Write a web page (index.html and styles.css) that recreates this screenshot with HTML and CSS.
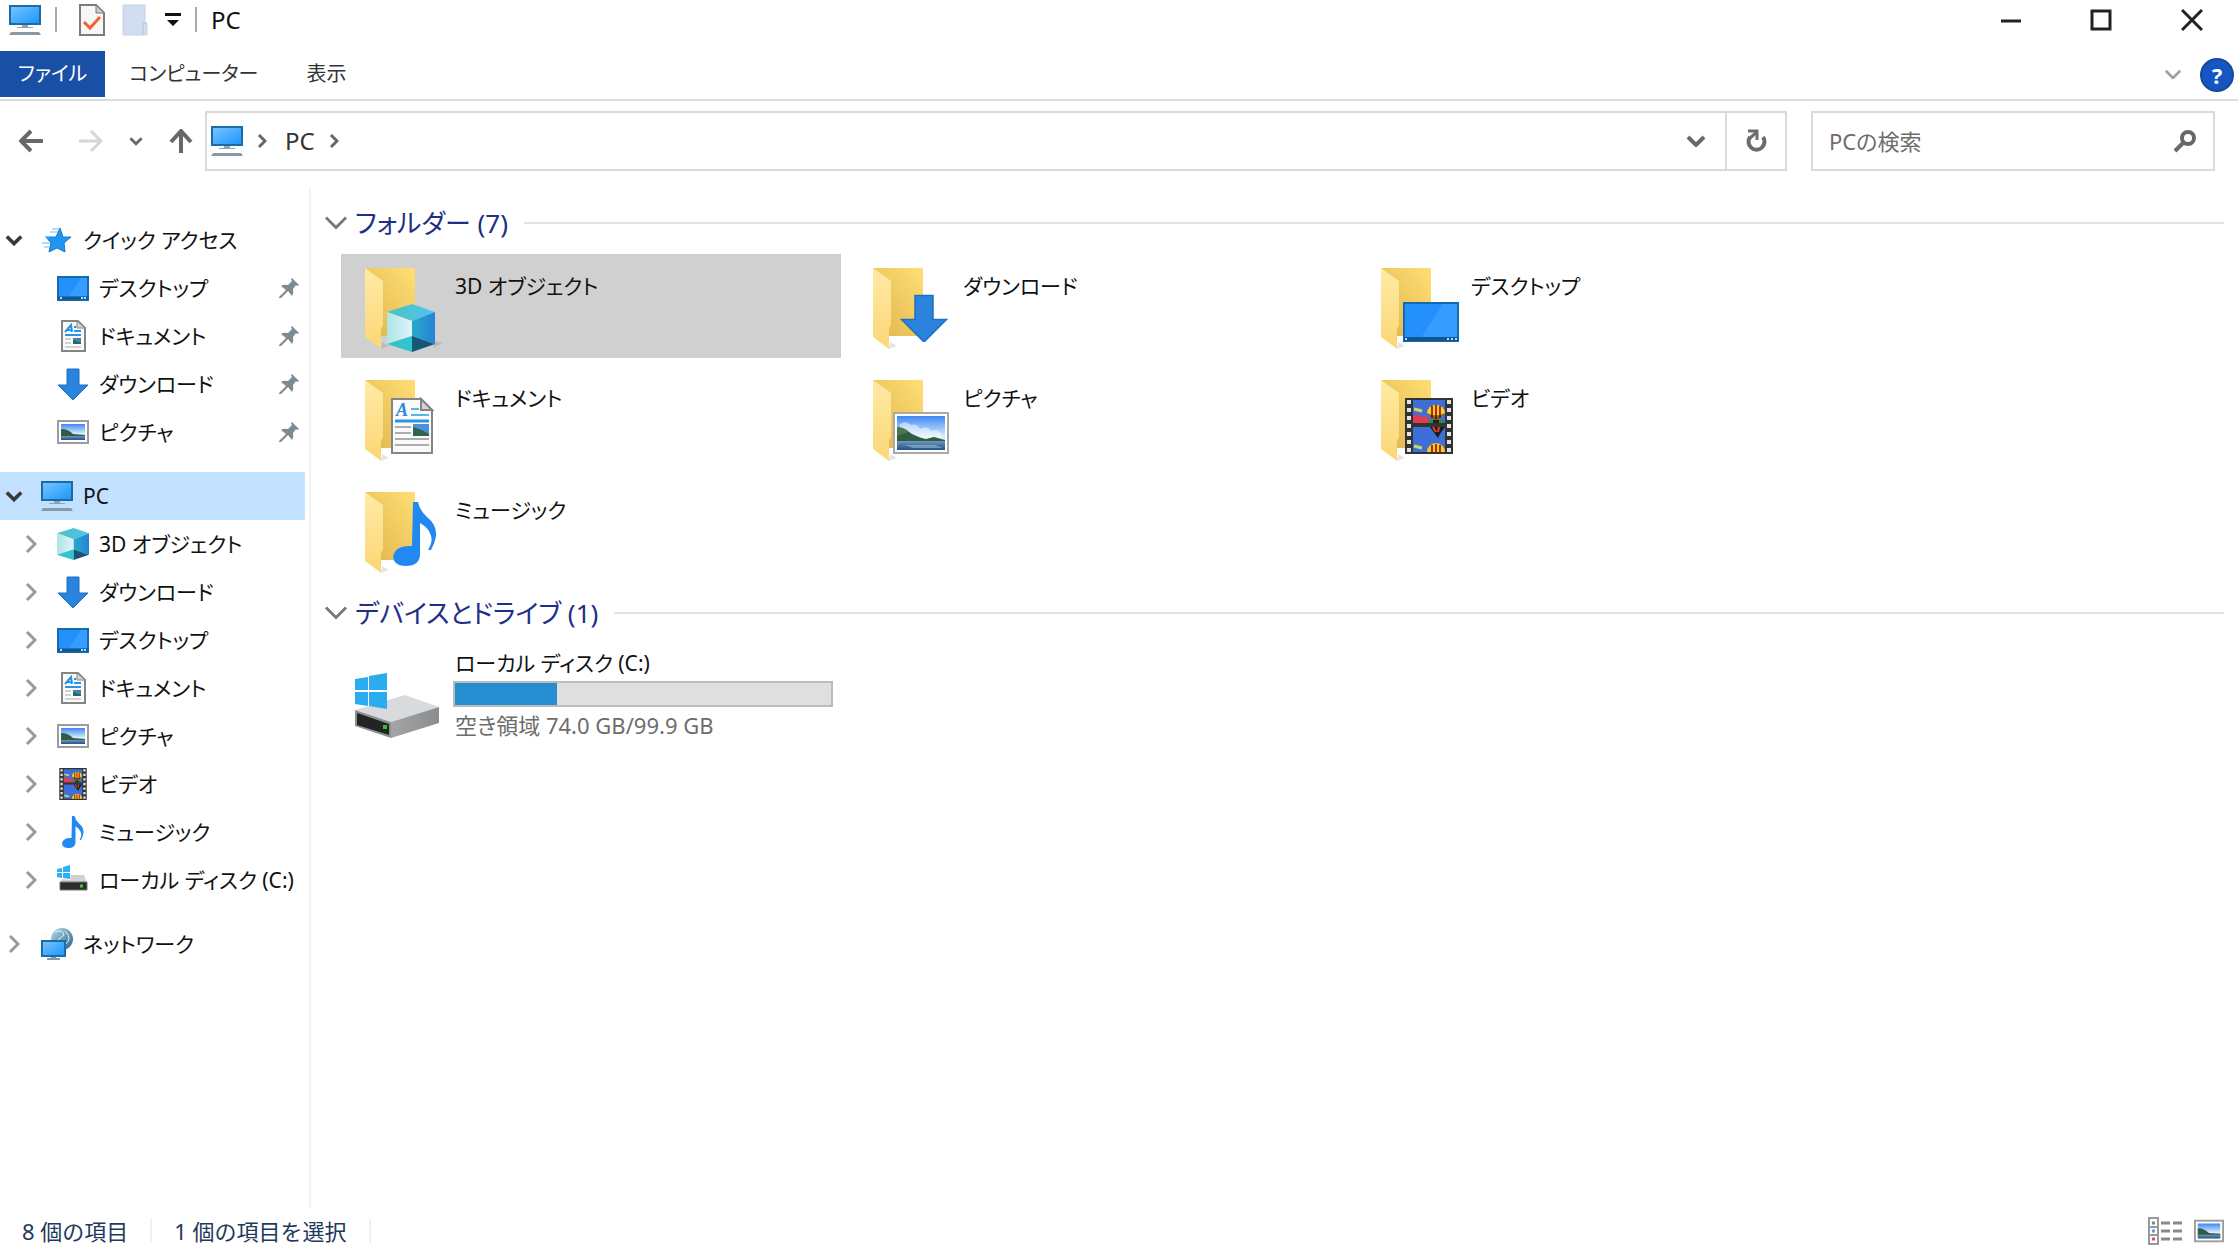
FILE: index.html
```html
<!DOCTYPE html>
<html lang="ja">
<head>
  <meta charset="UTF-8" />
  <meta name="viewport" content="width=device-width, initial-scale=1.0"/>
  <title>PC</title>
  <link rel="stylesheet" href="styles.css">
</head>
<body>

  <!-- icon sprite -->
  <svg class="sprite" width="0" height="0" aria-hidden="true">
    <defs>
      <linearGradient id="g-screen" x1="0" y1="0" x2="1" y2="1">
        <stop offset="0" stop-color="#7cc6ff"/><stop offset="1" stop-color="#1795fb"/>
      </linearGradient>
      <linearGradient id="g-back" x1="0" y1="1" x2="1" y2="0">
        <stop offset="0" stop-color="#dfb44c"/><stop offset="1" stop-color="#ffdf75"/>
      </linearGradient>
      <linearGradient id="g-front" x1="0" y1="0" x2="0" y2="1">
        <stop offset="0" stop-color="#ffeaa4"/><stop offset="1" stop-color="#fbd777"/>
      </linearGradient>
      <linearGradient id="g-sky" x1="0" y1="0" x2="0" y2="1">
        <stop offset="0" stop-color="#3f87f2"/><stop offset="0.6" stop-color="#d8ecfb"/>
      </linearGradient>
      <linearGradient id="g-water" x1="0" y1="0" x2="0" y2="1">
        <stop offset="0" stop-color="#6d97bd"/><stop offset="1" stop-color="#235087"/>
      </linearGradient>
      <linearGradient id="g-right" x1="0" y1="0" x2="1" y2="0">
        <stop offset="0" stop-color="#29aac8"/><stop offset="1" stop-color="#2583d9"/>
      </linearGradient>
      <linearGradient id="g-left" x1="0" y1="0" x2="1" y2="0">
        <stop offset="0" stop-color="#aee5e4"/><stop offset="1" stop-color="#e0f3fb"/>
      </linearGradient>
      <linearGradient id="g-top" x1="0" y1="0" x2="1" y2="0">
        <stop offset="0" stop-color="#4ec3c0"/><stop offset="1" stop-color="#4fc3f0"/>
      </linearGradient>
      <linearGradient id="g-globe" x1="0" y1="0" x2="1" y2="1">
        <stop offset="0" stop-color="#b9dcea"/><stop offset="1" stop-color="#1f6288"/>
      </linearGradient>
      <linearGradient id="g-side" x1="0" y1="0" x2="1" y2="0">
        <stop offset="0" stop-color="#a4a5a7"/><stop offset="1" stop-color="#8b8c8e"/>
      </linearGradient>
    </defs>

    <symbol id="i-pc" viewBox="0 0 32 32">
      <rect x="1" y="2" width="30" height="18" fill="url(#g-screen)" stroke="#1c6ba6" stroke-width="2"/>
      <path d="M13 21h6v2h5v1H8v-1h5z" fill="#8ea3b3"/>
      <path d="M2 28h28l2 3H0z" fill="#8999a8"/>
    </symbol>

    <symbol id="i-check" viewBox="0 0 26 32">
      <path d="M1 1h16l8 8v22H1z" fill="#f7f7f7" stroke="#7b7b7b" stroke-width="2"/>
      <path d="M17 1v8h8z" fill="#c9c9c9" stroke="#7b7b7b"/>
      <path d="M5 18l6 6 10-11" fill="none" stroke="#f0642d" stroke-width="3"/>
    </symbol>

    <symbol id="i-newfolder" viewBox="0 0 26 32">
      <path d="M1 1h22v18h2v12H1z" fill="#d3ddf0" stroke="#c3d0e8"/>
      <path d="M21 31V19h3" fill="none" stroke="#b2c2de"/>
    </symbol>

    <symbol id="i-star" viewBox="0 0 32 32">
      <path d="M19 4l3 9h8l-7 6 1 9-8-4-8 4 2-9-5-6h10z" fill="#2196f0" stroke="#1878c8"/>
      <path d="M11 5h8M9 8h8M4 13h5M1 19h8M3 23h6" stroke="#6bb8f3" stroke-width="1"/>
    </symbol>

    <symbol id="i-desktop" viewBox="0 0 32 32">
      <rect x="1" y="5" width="30" height="23" fill="#2390fb" stroke="#1569ad" stroke-width="2"/>
      <path d="M12 24L24 6h6v18z" fill="#369cff"/>
      <path d="M1 26h30" stroke="#11578f" stroke-width="3"/>
      <path d="M3 26h2M24 26h2M27 26h2" stroke="#b6dcff" stroke-width="2"/>
    </symbol>

    <symbol id="i-doc" viewBox="0 0 32 32">
      <path d="M5 1h16l7 7v23H5z" fill="#fafafa" stroke="#858585" stroke-width="2"/>
      <path d="M20 1v7h8z" fill="#d5d5d5" stroke="#858585"/>
      <path d="M8 12l6-7 1 7M10 10h5M17 7h2M17 11h7M8 15h16" fill="none" stroke="#2a94dd" stroke-width="2"/>
      <path d="M8 19h6M8 23h6M8 27h16" stroke="#adadad" stroke-width="1"/>
      <path d="M16 18h8v6h-8z" fill="#3d80ba"/>
      <path d="M16 20l8 3v1h-8z" fill="#33634a"/>
    </symbol>

    <symbol id="i-down" viewBox="0 0 32 32">
      <path d="M10 1h12v16h9L16 32 1 17h9z" fill="#2b83de" stroke="#1f6fc2"/>
    </symbol>

    <symbol id="i-photo" viewBox="0 0 56 42">
      <rect x="1" y="1" width="54" height="40" fill="#fff" stroke="#a9a9a9" stroke-width="2"/>
      <rect x="4" y="4" width="48" height="34" fill="url(#g-sky)"/>
      <path d="M7 12q6-4 11 1 6-2 9 4 8-4 11 2 6-2 10 2v8H6z" fill="#fff" opacity="0.5"/>
      <path d="M4 16q8 0 15 6 8 4 14 5l8-2 11 3v3H4z" fill="#2f5c43"/>
      <path d="M4 15q7 0 12 5l-12 4z" fill="#4a7752"/>
      <rect x="4" y="29" width="48" height="9" fill="url(#g-water)"/>
      <path d="M12 33h30l8 3H20z" fill="#c5d9ea" opacity="0.4"/>
    </symbol>

    <symbol id="i-photo-sm" viewBox="0 0 32 24">
      <rect x="1" y="1" width="30" height="22" fill="#fff" stroke="#9c9c9c" stroke-width="2"/>
      <rect x="4" y="4" width="24" height="16" fill="url(#g-sky)"/>
      <path d="M4 9q7 0 12 5l12 1v2H4z" fill="#2f5c43"/>
      <rect x="4" y="16" width="24" height="4" fill="url(#g-water)"/>
    </symbol>

    <symbol id="i-cube" viewBox="0 0 48 48">
      <path d="M0 8L25 0l23 8-23 9z" fill="url(#g-top)"/>
      <path d="M0 8l25 9v15L0 40z" fill="url(#g-left)"/>
      <path d="M48 8l-23 9v15l23 8z" fill="url(#g-right)"/>
      <path d="M0 40l25-8v16z" fill="#33c3cd"/>
      <path d="M48 40l-23-8v16z" fill="#185676"/>
    </symbol>

    <symbol id="i-film" viewBox="0 0 48 56">
      <rect x="0" y="0" width="48" height="56" fill="#333"/>
      <path d="M4 2v52M44 2v52" stroke="#e4e4e4" stroke-width="4" stroke-dasharray="4 4"/>
      <path d="M8 2h32v23H8zM8 29h32v25H8z" fill="#3e6fd6"/>
      <path d="M8 18l5-2 4 3 5-1 3 7H8z" fill="#e23b52"/>
      <path d="M22 25l4-3 14 1v2z" fill="#2e8a3d"/>
      <path d="M9 11l8 2M9 48l8 2" stroke="#c7d85a" stroke-width="3"/>
      <path d="M22 15a9 8 0 0 1 18 0l-6 7h-6z" fill="#f4d21c"/>
      <path d="M27 8v12M31 7v14M35 8v12" stroke="#b52518" stroke-width="2"/>
      <path d="M22 15q9 5 18 0l-6 7h-6z" fill="#222" opacity="0.6"/>
      <path d="M28 22h6v3h-6z" fill="#222"/>
      <path d="M25 29h15l-5 7-2 4-3-4z" fill="#1b1b1b"/>
      <path d="M28 29l3 5M34 29l-1 5" stroke="#e2412c" stroke-width="2"/>
      <path d="M22 54a9 9 0 0 1 18 0z" fill="#f4d21c"/>
      <path d="M27 47v7M31 46v8M35 47v7" stroke="#b52518" stroke-width="2"/>
    </symbol>

    <symbol id="i-note" viewBox="0 0 44 64">
      <path d="M20 0h5q2 9 9 15 10 8 9 19-1 7-5 14h-3q5-8 3-14-2-8-11-13v32q-1 11-14 11-12 0-13-9 2-12 19-11z" fill="#2288f2"/>
    </symbol>

    <symbol id="i-drive-sm" viewBox="0 0 32 32">
      <path d="M0 5l5-1v4H0zM6 3l7-2v7H6zM0 9h5v5l-5-1zM6 9h7v6l-7-1z" fill="#2cb1f2"/>
      <path d="M14 11h13l3 8H3l2-4 8 1z" fill="#cfd1d4"/>
      <path d="M3 18h27v8H3z" fill="#2c2c2c" stroke="#777"/>
      <path d="M23 22h3" stroke="#35d12c" stroke-width="3"/>
    </symbol>

    <symbol id="i-network" viewBox="0 0 32 32">
      <circle cx="21" cy="11" r="11" fill="url(#g-globe)"/>
      <path d="M14 4q8-3 9 3l-6 5M24 3q5 4 4 9l-4 5" fill="none" stroke="#e1f2f8" stroke-width="1"/>
      <rect x="1" y="13" width="23" height="15" fill="url(#g-screen)" stroke="#1c6ba6" stroke-width="2"/>
      <path d="M10 29h5v1h4v2H6v-2h4z" fill="#8999a8"/>
    </symbol>

    <symbol id="i-pin" viewBox="0 0 20 20">
      <path d="M13 0l7 7-2 1-1-1-3 4q1 4-1 7l-4-5-7 7H0v-1l7-7-5-4q3-2 7-1l4-4-1-2z" fill="#7c8a94"/>
    </symbol>

    <symbol id="i-chev-down" viewBox="0 0 20 12">
      <path d="M2 2l8 8 8-8" fill="none" stroke="currentColor" stroke-width="4"/>
    </symbol>
    <symbol id="i-chev-right" viewBox="0 0 12 20">
      <path d="M2 2l8 8-8 8" fill="none" stroke="currentColor" stroke-width="3"/>
    </symbol>

    <symbol id="i-folder" viewBox="0 0 96 96">
      <path d="M32 91l8-3-7-4z" fill="#000" opacity="0.1"/>
      <path d="M16 10h50v68H24z" fill="url(#g-back)"/>
      <path d="M16 10l18 13v44l-2 4v20L16 79z" fill="url(#g-front)"/>
    </symbol>
  </svg>

  <header class="titlebar">
    <svg class="icon"><use href="#i-pc"/></svg>
    <span class="bar"></span>
    <button class="quick" aria-label="プロパティ"><svg><use href="#i-check"/></svg></button>
    <button class="quick" aria-label="新しいフォルダー"><svg><use href="#i-newfolder"/></svg></button>
    <button class="more" aria-label="カスタマイズ"><svg viewBox="0 0 16 14"><path d="M0 0h16v3H0zM2 7h12l-6 6z" fill="#111"/></svg></button>
    <span class="bar"></span>
    <h1>PC</h1>
    <div class="window-buttons">
      <button aria-label="最小化"><svg viewBox="0 0 22 22"><path d="M1 12h20" stroke="#222" stroke-width="3"/></svg></button>
      <button aria-label="最大化"><svg viewBox="0 0 22 22"><path d="M2 2h18v18H2z" fill="none" stroke="#222" stroke-width="3"/></svg></button>
      <button aria-label="閉じる"><svg viewBox="0 0 22 22"><path d="M1 1l20 20M21 1L1 21" stroke="#222" stroke-width="3"/></svg></button>
    </div>
  </header>

  <nav class="ribbon">
    <a href="#" class="tab file">ファイル</a>
    <a href="#" class="tab">コンピューター</a>
    <a href="#" class="tab">表示</a>
    <button class="expand" aria-label="リボンの展開"><svg viewBox="0 0 20 12"><path d="M2 2l8 8 8-8" fill="none" stroke="#a0a0a0" stroke-width="3"/></svg></button>
    <button class="help" aria-label="ヘルプ">?</button>
  </nav>

  <div class="navbar">
    <div class="history">
      <button class="back" aria-label="戻る"><svg class="arrow" viewBox="0 0 24 24"><path d="M24 12H2M12 2L2 12l10 10" fill="none" stroke="#686868" stroke-width="4"/></svg></button>
      <button aria-label="進む"><svg class="arrow" viewBox="0 0 24 24"><path d="M0 12h22M12 2l10 10-10 10" fill="none" stroke="#d6d6d6" stroke-width="3"/></svg></button>
      <button class="recent" aria-label="最近表示した場所"><svg><use href="#i-chev-down"/></svg></button>
      <button aria-label="上へ"><svg class="arrow" viewBox="0 0 24 24"><path d="M12 24V2M2 13L12 2l10 11" fill="none" stroke="#686868" stroke-width="4"/></svg></button>
    </div>
    <div class="address">
      <svg class="icon"><use href="#i-pc"/></svg>
      <svg class="crumb" viewBox="0 0 10 16"><path d="M2 2l6 6-6 6" fill="none" stroke="#686868" stroke-width="3"/></svg>
      <a href="#">PC</a>
      <svg class="crumb" viewBox="0 0 10 16"><path d="M2 2l6 6-6 6" fill="none" stroke="#686868" stroke-width="3"/></svg>
      <button class="drop" aria-label="以前の場所"><svg class="chev-down"><use href="#i-chev-down"/></svg></button>
      <button class="refresh" aria-label="最新の情報に更新"><svg viewBox="0 0 22 24"><path d="M18 8a8 8 0 1 1-13 0" fill="none" stroke="#6c6c6c" stroke-width="4"/><path d="M3 2h9v9" fill="none" stroke="#6c6c6c" stroke-width="3"/><path d="M12 3l-7 6" stroke="#6c6c6c" stroke-width="3"/></svg></button>
    </div>
    <form class="search">
      <input type="text" placeholder="PCの検索" aria-label="PCの検索">
      <button type="button" aria-label="検索"><svg viewBox="0 0 24 24"><circle cx="15" cy="9" r="6" fill="none" stroke="#686868" stroke-width="4"/><path d="M11 13l-9 9" stroke="#686868" stroke-width="4"/></svg></button>
    </form>
  </div>

  <div class="content">
    <aside class="sidebar">
      <ul>
        <li><a href="#" class="root"><svg class="chev-down"><use href="#i-chev-down"/></svg><svg class="icon"><use href="#i-star"/></svg>クイック アクセス</a></li>
        <li><a href="#"><svg class="icon"><use href="#i-desktop"/></svg>デスクトップ<svg class="pin"><use href="#i-pin"/></svg></a></li>
        <li><a href="#"><svg class="icon"><use href="#i-doc"/></svg>ドキュメント<svg class="pin"><use href="#i-pin"/></svg></a></li>
        <li><a href="#"><svg class="icon"><use href="#i-down"/></svg>ダウンロード<svg class="pin"><use href="#i-pin"/></svg></a></li>
        <li><a href="#"><svg class="icon"><use href="#i-photo-sm"/></svg>ピクチャ<svg class="pin"><use href="#i-pin"/></svg></a></li>
      </ul>
      <ul>
        <li><a href="#" class="root selected"><svg class="chev-down"><use href="#i-chev-down"/></svg><svg class="icon"><use href="#i-pc"/></svg>PC</a></li>
        <li><a href="#" class="sub"><svg class="chev-right"><use href="#i-chev-right"/></svg><svg class="icon"><use href="#i-cube"/></svg>3D オブジェクト</a></li>
        <li><a href="#" class="sub"><svg class="chev-right"><use href="#i-chev-right"/></svg><svg class="icon"><use href="#i-down"/></svg>ダウンロード</a></li>
        <li><a href="#" class="sub"><svg class="chev-right"><use href="#i-chev-right"/></svg><svg class="icon"><use href="#i-desktop"/></svg>デスクトップ</a></li>
        <li><a href="#" class="sub"><svg class="chev-right"><use href="#i-chev-right"/></svg><svg class="icon"><use href="#i-doc"/></svg>ドキュメント</a></li>
        <li><a href="#" class="sub"><svg class="chev-right"><use href="#i-chev-right"/></svg><svg class="icon"><use href="#i-photo-sm"/></svg>ピクチャ</a></li>
        <li><a href="#" class="sub"><svg class="chev-right"><use href="#i-chev-right"/></svg><svg class="icon"><use href="#i-film"/></svg>ビデオ</a></li>
        <li><a href="#" class="sub"><svg class="chev-right"><use href="#i-chev-right"/></svg><svg class="icon"><use href="#i-note"/></svg>ミュージック</a></li>
        <li><a href="#" class="sub"><svg class="chev-right"><use href="#i-chev-right"/></svg><svg class="icon"><use href="#i-drive-sm"/></svg>ローカル ディスク (C:)</a></li>
      </ul>
      <ul>
        <li><a href="#" class="root"><svg class="chev-right"><use href="#i-chev-right"/></svg><svg class="icon"><use href="#i-network"/></svg>ネットワーク</a></li>
      </ul>
    </aside>

    <main>
      <section>
        <h2><svg viewBox="0 0 24 14"><path d="M1 1l11 11L23 1" fill="none" stroke="#777" stroke-width="3"/></svg>フォルダー (7)</h2>
        <div class="tiles">
          <a href="#" class="tile selected">
            <svg viewBox="0 0 96 96"><use href="#i-folder" width="96" height="96"/><path d="M84 90l10-5-8-2z" opacity="0.1"/><use href="#i-cube" x="38" y="46" width="48" height="48"/></svg>
            <span>3D オブジェクト</span>
          </a>
          <a href="#" class="tile">
            <svg viewBox="0 0 96 96"><use href="#i-folder" width="96" height="96"/><use href="#i-down" x="43" y="36" width="48" height="48"/></svg>
            <span>ダウンロード</span>
          </a>
          <a href="#" class="tile">
            <svg viewBox="0 0 96 96"><use href="#i-folder" width="96" height="96"/><rect x="39" y="45" width="54" height="38" fill="#2390fb" stroke="#1569ad" stroke-width="2"/><path d="M56 80l22-34h14v34z" fill="#369cff"/><path d="M39 81h54" stroke="#11578f" stroke-width="4"/><path d="M40 81h2M82 81h2M86 81h2M90 81h2" stroke="#b6dcff" stroke-width="2"/></svg>
            <span>デスクトップ</span>
          </a>
          <a href="#" class="tile">
            <svg viewBox="0 0 96 96"><use href="#i-folder" width="96" height="96"/>
              <path d="M43 29h29l11 11v43H43z" fill="#fafafa" stroke="#858585" stroke-width="2"/><path d="M72 29v11h11z" fill="#d5d5d5" stroke="#858585" stroke-width="2"/>
              <text x="47" y="46" class="letter">A</text>
              <path d="M62 39h8M62 45h18" stroke="#55b5ee" stroke-width="2"/><path d="M46 51h34" stroke="#2a94dd" stroke-width="3"/>
              <path d="M46 57h16M46 63h16M46 69h34M46 75h34" stroke="#adadad" stroke-width="2"/>
              <path d="M64 54h16v12H64z" fill="#4d8fd8"/><path d="M64 57q8 2 16 7v2H64z" fill="#33634a"/></svg>
            <span>ドキュメント</span>
          </a>
          <a href="#" class="tile">
            <svg viewBox="0 0 96 96"><use href="#i-folder" width="96" height="96"/><use href="#i-photo" x="36" y="42" width="56" height="42"/></svg>
            <span>ピクチャ</span>
          </a>
          <a href="#" class="tile">
            <svg viewBox="0 0 96 96"><use href="#i-folder" width="96" height="96"/><use href="#i-film" x="40" y="28" width="48" height="56"/></svg>
            <span>ビデオ</span>
          </a>
          <a href="#" class="tile">
            <svg viewBox="0 0 96 96"><use href="#i-folder" width="96" height="96"/><use href="#i-note" x="44" y="20" width="44" height="64"/></svg>
            <span>ミュージック</span>
          </a>
        </div>
      </section>

      <section>
        <h2><svg viewBox="0 0 24 14"><path d="M1 1l11 11L23 1" fill="none" stroke="#777" stroke-width="3"/></svg>デバイスとドライブ (1)</h2>
        <div class="tiles">
          <a href="#" class="tile">
            <svg viewBox="0 0 96 96">
              <path d="M6 62l50-15 34 12-48 15z" fill="#d9dadd"/>
              <path d="M42 74l48-15v16L42 90z" fill="url(#g-side)"/>
              <path d="M6 62l36 12v16L6 78z" fill="#8d8f92"/>
              <path d="M8 65l32 11v11L8 77z" fill="#232323"/>
              <rect x="34" y="77" width="4" height="4" fill="#2fc426"/>
              <path d="M6 31l13-2v13H6zM20 28l18-3v17H20zM6 44h13v14l-13-2zM20 44h18v17l-18-3z" fill="#2bacee"/>
            </svg>
            <div class="drive-info">
              <span>ローカル ディスク (C:)</span>
              <div class="usage"><div class="used" style="width: 27%"></div></div>
              <span class="free">空き領域 74.0 GB/99.9 GB</span>
            </div>
          </a>
        </div>
      </section>
    </main>
  </div>

  <footer class="status">
    <span>8 個の項目</span>
    <span>1 個の項目を選択</span>
    <div class="views">
      <button aria-label="詳細"><svg class="details" viewBox="0 0 34 28"><path d="M1 1h9v26H1zM1 10h9M1 18h9" fill="#fff" stroke="#999" stroke-width="2"/><path d="M13 6h9M25 6h9M13 14h9M25 14h9M13 22h9M25 22h9" stroke="#8a8a8a" stroke-width="3"/><path d="M4 6h3" stroke="#5c9a78" stroke-width="3"/><path d="M4 14h3" stroke="#5a96f0" stroke-width="3"/><path d="M4 22h3" stroke="#e5484d" stroke-width="3"/></svg></button>
      <button aria-label="大アイコン"><svg class="large"><use href="#i-photo-sm"/></svg></button>
    </div>
  </footer>

</body>
</html>
```
FILE: styles.css
```css
* { margin: 0; padding: 0; box-sizing: border-box; }
body {
  min-height: 100vh;
  display: flex;
  flex-direction: column;
  background: #fff;
  color: #111;
  font-family: "Noto Sans", "Noto Sans CJK JP", sans-serif;
  font-size: 22px;
  line-height: 32px;
  font-feature-settings: "palt";
}
a { color: inherit; text-decoration: none; }
ul { list-style: none; }
svg { display: block; flex: none; }
button {
  display: flex;
  align-items: center;
  justify-content: center;
  background: transparent;
  border: none;
  color: inherit;
  font: inherit;
  cursor: pointer;
}
.icon { width: 32px; height: 32px; }
.chev-down { width: 20px; height: 12px; }
.chev-right { width: 12px; height: 20px; }

/* title bar */
.titlebar {
  height: 51px;
  padding: 0 24px 12px 9px;
  display: flex;
  align-items: center;
}
.titlebar h1 {
  font-size: 24px;
  font-weight: normal;
}
.bar {
  width: 2px;
  height: 25px;
  margin: 0 14px;
  background: #aaa;
}
.quick { margin: 0 9px 0 8px; }
.quick svg { width: 26px; height: 32px; }
.more { margin-left: 8px; }
.more svg { width: 16px; height: 14px; }
.window-buttons {
  display: flex;
  margin-left: auto;
}
.window-buttons button {
  width: 90px;
  height: 39px;
}
.window-buttons button:last-child { width: 44px; margin-left: 24px; }
.window-buttons svg { width: 22px; height: 22px; }

/* ribbon */
.ribbon {
  height: 50px;
  display: flex;
  align-items: flex-start;
  border-bottom: 2px solid #dcdcdc;
  padding-right: 4px;
  color: #333;
}
.tab {
  padding: 7px 24px;
  font-size: 20px;
}
.file {
  background: #1950a5;
  color: #fff;
  padding: 7px 18px;
}
.expand {
  margin-left: auto;
  width: 54px;
  height: 46px;
}
.expand svg { width: 18px; }
.help {
  width: 34px;
  height: 34px;
  margin-top: 7px;
  border: 2px solid #174a94;
  border-radius: 50%;
  background: #1556c4;
  color: #fff;
  font-weight: bold;
}

/* address bar */
.navbar {
  display: flex;
  padding: 10px 23px 17px 0;
  color: #686868;
}
.history {
  width: 205px;
  display: flex;
  align-items: center;
  gap: 26px;
  padding-left: 19px;
}
.back { margin-right: 10px; }
.arrow { width: 24px; height: 24px; }
.recent svg { width: 14px; height: 10px; }
.address {
  flex: 1;
  height: 60px;
  display: flex;
  align-items: center;
  border: 2px solid #dadada;
  padding-left: 4px;
}
.address a {
  color: #333;
  font-size: 24px;
}
.crumb {
  width: 10px;
  height: 16px;
  margin: 0 18px 0 14px;
}
.drop {
  width: 58px;
  margin-left: auto;
}
.refresh {
  width: 60px;
  height: 56px;
  border-left: 2px solid #dadada;
}
.refresh svg { width: 22px; height: 24px; }
.search {
  width: 404px;
  height: 60px;
  margin-left: 24px;
  display: flex;
  border: 2px solid #dadada;
  padding: 0 16px;
}
.search input {
  flex: 1;
  min-width: 0;
  border: none;
  outline: none;
  background: transparent;
  font: inherit;
  font-feature-settings: inherit;
}
.search input::placeholder { color: #6d6d6d; }
.search svg { width: 24px; height: 24px; }

/* content */
.content {
  flex: 1;
  display: flex;
}
.sidebar {
  width: 311px;
  padding: 28px 4px 0 0;
  border-right: 2px solid #f2f2f2;
}
.sidebar ul { margin-bottom: 16px; }
.sidebar a {
  height: 48px;
  display: flex;
  align-items: center;
  padding-left: 57px;
  font-size: 21px;
  white-space: nowrap;
}
.sidebar .icon { margin-right: 10px; }
.sidebar .root { padding-left: 5px; }
.sidebar .sub { padding-left: 25px; }
.sidebar .chev-right { color: #999; margin-right: 20px; }
.sidebar .root .chev-right { margin: 0 21px 0 3px; }
.sidebar .root .chev-down { width: 18px; color: #3a3a3a; margin-right: 18px; }
.sidebar a.selected { background: #c2e0ff; }
.sidebar a:hover { background: #e5f3ff; }
.pin {
  width: 20px;
  height: 20px;
  margin: 0 6px 0 auto;
}
main {
  flex: 1;
  padding: 9px 14px 0 14px;
}
main h2 {
  height: 52px;
  margin-bottom: 5px;
  display: flex;
  align-items: center;
  color: #1e2f87;
  font-size: 26px;
  font-weight: normal;
}
main h2 svg {
  width: 22px;
  height: 14px;
  margin-right: 8px;
}
main h2::after {
  content: "";
  flex: 1;
  height: 2px;
  margin-left: 16px;
  background: #e2e2e2;
}
.tiles {
  display: grid;
  grid-template-columns: repeat(auto-fill, 500px);
  gap: 8px;
  padding-left: 16px;
  margin-bottom: 5px;
}
.tile {
  height: 104px;
  display: flex;
  padding: 4px 8px;
  font-size: 21px;
}
.tile > svg { width: 96px; height: 96px; margin-right: 10px; }
.tile > span { padding-top: 12px; }
.tile.selected { background: #d0d0d0; }
.letter {
  font: italic bold 18px "Liberation Serif", serif;
  fill: #2a8ad6;
}
.drive-info { flex: 1; }
.drive-info span {
  display: block;
  line-height: 30px;
}
.usage {
  width: 380px;
  height: 26px;
  margin: 3px 0 3px -2px;
  border: 2px solid #bcbcbc;
  background: #dfdfdf;
}
.used {
  height: 100%;
  background: #268dd1;
}
.free { color: #6d6d6d; font-size: 22px; }

/* status bar */
.status {
  height: 38px;
  display: flex;
  align-items: center;
  padding: 8px 14px 0 0;
  color: #1e395b;
  font-feature-settings: normal;
}
.status span {
  line-height: 24px;
  padding: 0 22px;
  border-right: 2px solid #f0f0f0;
}
.views {
  display: flex;
  gap: 12px;
  margin-left: auto;
}
.details { width: 34px; height: 28px; }
.large { width: 30px; height: 24px; }
```
